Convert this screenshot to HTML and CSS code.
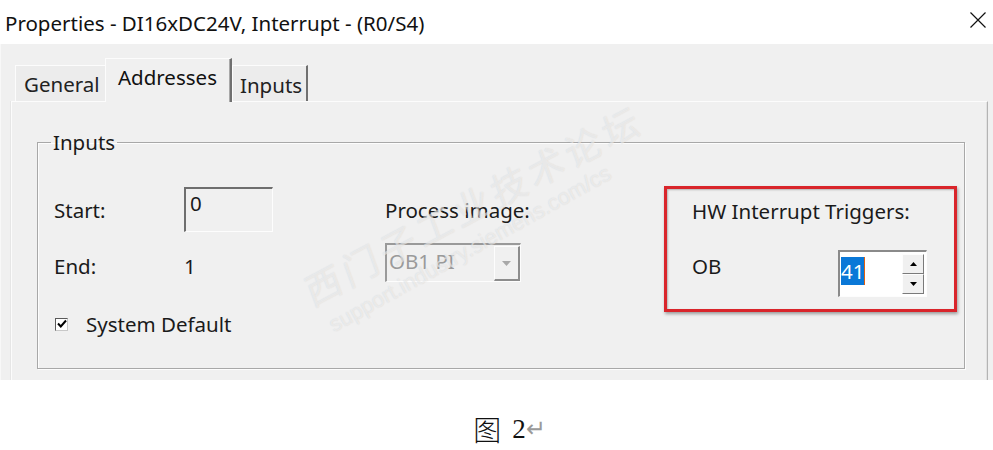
FILE: index.html
```html
<!DOCTYPE html>
<html>
<head>
<meta charset="utf-8">
<link rel="stylesheet" href="styles.css">
</head>
<body>
<div class="shot">
  <div class="titlebar">
    <span class="title">Properties - DI16xDC24V, Interrupt - (R0/S4)</span>
    <svg class="close" width="18" height="18" viewBox="0 0 18 18"><path d="M1.5 1.5 L16.5 16.5 M16.5 1.5 L1.5 16.5" stroke="#111" stroke-width="1.2" fill="none"/></svg>
  </div>
  <div class="client">
    <div class="tabs">
      <div class="tab t-general">General</div>
      <div class="tab active">Addresses</div>
      <div class="tab last">Inputs</div>
    </div>
    <div class="panel">
      <fieldset class="group">
        <legend>Inputs</legend>
        <div class="cols">
          <div class="col col-left">
            <div class="row r1">
              <span class="lbl w130">Start:</span>
              <span class="textbox">0</span>
            </div>
            <div class="row r2">
              <span class="lbl w130">End:</span>
              <span class="lbl">1</span>
            </div>
            <div class="row r3">
              <span class="check"><svg width="10" height="10" viewBox="0 0 10 10"><path d="M1 4.5 L3.8 7.5 L9 1.5" stroke="#000" stroke-width="2" fill="none"/></svg></span>
              <span class="lbl">System Default</span>
            </div>
          </div>
          <div class="col col-mid">
            <div class="row r1"><span class="lbl">Process image:</span></div>
            <div class="combo">
              <span class="combo-text">OB1 PI</span>
              <span class="combo-btn"><svg width="9" height="5" viewBox="0 0 9 5"><path d="M0 0 H9 L4.5 5 Z" fill="#a8a8a8"/></svg></span>
            </div>
          </div>
          <div class="redbox">
            <div class="row hw"><span class="lbl">HW Interrupt Triggers:</span></div>
            <div class="row ob">
              <span class="lbl oblbl">OB</span>
              <span class="spin">
                <span class="spin-field"><span class="sel">41</span></span>
                <span class="spin-btns">
                  <span class="sbtn"><svg width="7" height="4" viewBox="0 0 7 4"><path d="M0 4 H7 L3.5 0 Z" fill="#000"/></svg></span>
                  <span class="sbtn"><svg width="7" height="4" viewBox="0 0 7 4"><path d="M0 0 H7 L3.5 4 Z" fill="#000"/></svg></span>
                </span>
              </span>
            </div>
          </div>
        </div>
      </fieldset>
      <div class="watermark wm1">西门子工业技术论坛</div>
      <div class="watermark wm2">support.industry.siemens.com/cs</div>
    </div>
  </div>
  <div class="caption"><span class="cjk">图</span><span class="num">2</span><span class="ret">↵</span></div>
</div>
</body>
</html>
```
FILE: styles.css
```css
html, body {
  margin: 0;
  padding: 0;
  background: #ffffff;
}
.shot {
  width: 993px;
  height: 450px;
  overflow: hidden;
  font-family: "Noto Sans", "Open Sans", sans-serif;
  color: #1a1a1a;
}
.titlebar {
  height: 44px;
  display: flex;
  align-items: center;
  justify-content: space-between;
  padding: 0 6px 0 5px;
  box-sizing: border-box;
  background: #fff;
}
.title {
  font-size: 20.5px;
  color: #111;
  margin-top: 1px;
}
.close {
  margin-top: -4px;
}
.client {
  height: 336px;
  background: #f0f0f0;
  overflow: hidden;
  padding-left: 3px;
  position: relative;
  border-left: 1px solid #f8f8f8;
}
.tabs {
  display: flex;
  align-items: flex-end;
  padding: 13px 0 0 11px;
  height: 44px;
  box-sizing: content-box;
  position: relative;
  z-index: 2;
}
.tab {
  height: 36px;
  font-size: 20.5px;
  display: flex;
  align-items: center;
  padding-top: 1px;
  box-sizing: border-box;
  border-top: 1px solid #fcfcfc;
  border-left: 1px solid #fcfcfc;
  background: #ececec;
  color: #222;
}
.t-general {
  width: 90px;
  padding-left: 8px;
}
.tab.active {
  width: 127px;
  height: 44px;
  padding: 0 0 7px 12px;
  margin-bottom: -1px;
  background: #f0f0f0;
  border-right: 2px solid #707070;
  box-shadow: inset -1px 0 #a8a8a8;
  color: #111;
}
.tab.last {
  width: 76px;
  padding-left: 7px;
  border-right: 2px solid #707070;
  padding-top: 2px;
}
.panel {
  margin-left: 7px;
  margin-right: 5px;
  height: 320px;
  border-top: 1px solid #fcfcfc;
  border-left: 1px solid #fcfcfc;
  border-right: 1px solid #b4b4b4;
  box-shadow: inset -1px 0 #e2e2e2, -1px 0 #e6e6e6;
  padding: 28px 22px 0 25px;
  box-sizing: border-box;
  position: relative;
  overflow: hidden;
}
.group {
  margin: 0;
  padding: 32px 0 24px 16px;
  border: 1px solid #a8a8a8;
  box-shadow: inset 1px 1px #fdfdfd, 1px 1px #fdfdfd;
  min-width: 0;
}
.group legend {
  font-size: 20.5px;
  padding: 0 2px;
  margin-left: -3px;
  line-height: 24px;
  color: #1a1a1a;
}
.cols {
  display: flex;
  align-items: flex-start;
}
.col {
  display: flex;
  flex-direction: column;
}
.col-left {
  width: 331px;
  padding-top: 1px;
}
.col-mid {
  width: 279px;
  padding-top: 1px;
}
.row {
  display: flex;
  align-items: center;
}
.lbl {
  font-size: 20.5px;
  line-height: 26px;
}
.w130 {
  width: 130px;
}
.r1 {
  height: 45px;
}
.r2 {
  height: 40px;
  margin-top: 14px;
}
.r3 {
  height: 40px;
  margin-top: 18px;
}
.textbox {
  width: 89px;
  height: 45px;
  box-sizing: border-box;
  border-top: 2px solid #6e6e6e;
  border-left: 2px solid #6e6e6e;
  border-right: 1px solid #fdfdfd;
  border-bottom: 1px solid #fdfdfd;
  background: #f0f0f0;
  font-size: 20.5px;
  padding: 2px 0 0 4px;
  line-height: 24px;
  align-self: flex-start;
}
.check {
  width: 13px;
  height: 13px;
  box-sizing: border-box;
  border: 1px solid #5a5a5a;
  border-right-color: #c8c8c8;
  border-bottom-color: #c8c8c8;
  background: #fff;
  display: flex;
  align-items: center;
  justify-content: center;
  margin: 0 18px 0 1px;
}
.combo {
  margin-top: 11px;
  width: 136px;
  height: 39px;
  box-sizing: border-box;
  border-top: 2px solid #9a9a9a;
  border-left: 2px solid #9a9a9a;
  border-right: 1px solid #fdfdfd;
  border-bottom: 1px solid #fdfdfd;
  display: flex;
  background: #f0f0f0;
}
.combo-text {
  flex: 1;
  font-size: 20.5px;
  color: #9a9a9a;
  padding-left: 2px;
  line-height: 32px;
}
.combo-btn {
  width: 26px;
  box-sizing: border-box;
  border-left: 1px solid #fdfdfd;
  border-top: 1px solid #fdfdfd;
  border-right: 2px solid #8c8c8c;
  border-bottom: 2px solid #8c8c8c;
  display: flex;
  align-items: center;
  justify-content: center;
  margin: 1px 0 0 0;
}
.redbox {
  width: 293px;
  height: 126px;
  box-sizing: border-box;
  border: 3px solid #d9252b;
  box-shadow: 1px 2px 3px rgba(0,0,0,0.35), inset 1px 1px 2px rgba(0,0,0,0.25);
  padding: 4px 0 0 25px;
  display: flex;
  flex-direction: column;
}
.hw {
  height: 36px;
}
.ob {
  align-items: flex-start;
  margin-top: 21px;
}
.oblbl {
  width: 146px;
  margin-top: 3px;
}
.spin {
  width: 89px;
  height: 47px;
  box-sizing: border-box;
  border-top: 2px solid #8a8a8a;
  border-left: 2px solid #8a8a8a;
  border-right: 1px solid #fdfdfd;
  border-bottom: 1px solid #fdfdfd;
  background: #fff;
  display: flex;
}
.spin-field {
  flex: 1;
  padding: 5px 0 0 1px;
}
.sel {
  display: inline-block;
  background: #0a78d7;
  color: #fff;
  font-size: 20.5px;
  line-height: 28px;
  padding: 0;
  border-right: 1px solid #e06010;
}
.spin-btns {
  width: 22px;
  display: flex;
  flex-direction: column;
  margin: 2px 2px 2px 0;
}
.sbtn {
  flex: 1;
  box-sizing: border-box;
  background: #f0f0f0;
  border-top: 1px solid #fdfdfd;
  border-left: 1px solid #fdfdfd;
  border-right: 1px solid #7a7a7a;
  border-bottom: 1px solid #7a7a7a;
  display: flex;
  align-items: center;
  justify-content: center;
}
.watermark {
  position: absolute;
  transform-origin: left bottom;
  white-space: nowrap;
  color: rgba(255,255,255,0.5);
  text-shadow: 0 0 1px rgba(140,140,140,0.3);
  pointer-events: none;
}
.wm1 {
  left: 301px;
  top: 170px;
  font-family: "Noto Sans CJK SC", sans-serif;
  font-size: 37px;
  line-height: 38px;
  letter-spacing: 5px;
  transform: rotate(-28deg) skewX(-8deg);
}
.wm2 {
  left: 324px;
  top: 212px;
  font-family: "Liberation Sans", sans-serif;
  font-size: 22px;
  line-height: 22px;
  transform: rotate(-29deg);
}
.caption {
  height: 70px;
  display: flex;
  align-items: center;
  justify-content: center;
  padding: 28px 0 0 26px;
  box-sizing: border-box;
  font-family: "Liberation Serif", serif;
  font-size: 27px;
  line-height: 32px;
  color: #111;
}
.cjk {
  font-family: "Noto Sans CJK SC", sans-serif;
  font-weight: 300;
  font-size: 28px;
  margin-right: 11px;
}
.ret {
  color: #9a9a9a;
  font-size: 24px;
  font-family: "DejaVu Sans", sans-serif;
}
```
